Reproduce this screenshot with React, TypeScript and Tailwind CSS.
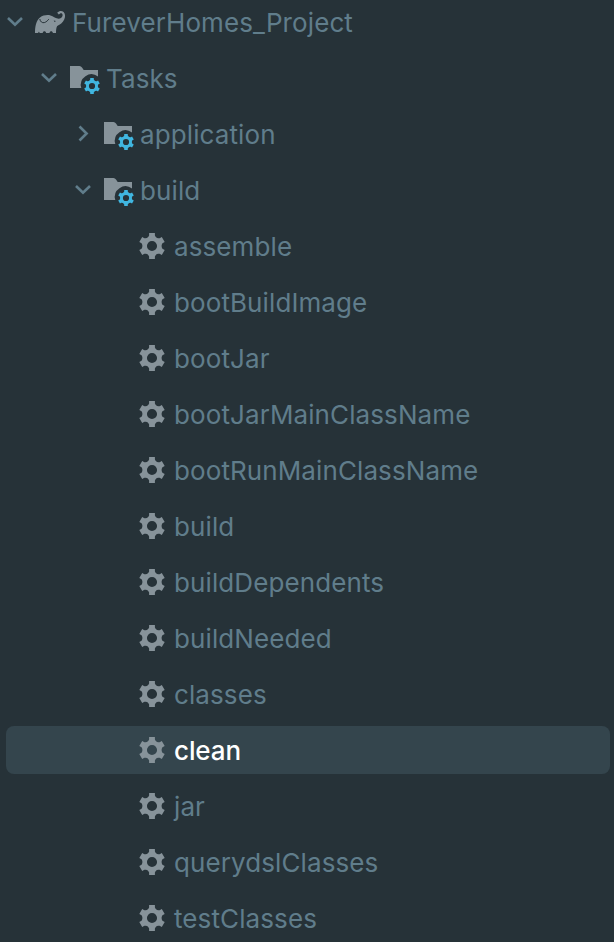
import React from "react";
import clsx from "clsx";

type IconKind = "gradle" | "folder" | "task";

type TreeNode = {
  label: string;
  icon: IconKind;
  level: number;
  open?: boolean;
  selected?: boolean;
};

const tasks = [
  "assemble",
  "bootBuildImage",
  "bootJar",
  "bootJarMainClassName",
  "bootRunMainClassName",
  "build",
  "buildDependents",
  "buildNeeded",
  "classes",
  "clean",
  "jar",
  "querydslClasses",
  "testClasses",
];

const nodes: TreeNode[] = [
  { label: "FureverHomes_Project", icon: "gradle", level: 0, open: true },
  { label: "Tasks", icon: "folder", level: 1, open: true },
  { label: "application", icon: "folder", level: 2, open: false },
  { label: "build", icon: "folder", level: 2, open: true },
  ...tasks.map((label): TreeNode => ({
    label,
    icon: "task",
    level: 3,
    selected: label === "clean",
  })),
];

const indents = ["pl-0", "pl-[34px]", "pl-[68px]", "pl-[102px]"];

// Six-toothed gear around the origin, outer radius 13
function Gear() {
  return (
    <>
      <circle r="7.35" fill="none" stroke="currentColor" strokeWidth="4.6" />
      {[0, 60, 120, 180, 240, 300].map((angle) => (
        <path
          key={angle}
          d="M-4.6 -7.6L-2.9 -10.4V-13H2.9V-10.4L4.6 -7.6Z"
          fill="currentColor"
          transform={`rotate(${angle})`}
        />
      ))}
    </>
  );
}

function TaskIcon() {
  return (
    <svg viewBox="-16 -16 32 32" className="size-8 text-[#87939a]">
      <Gear />
    </svg>
  );
}

function FolderIcon() {
  return (
    <svg viewBox="0 0 32 32" className="size-8 overflow-visible">
      <path d="M2 4H11.5Q13 4 14 5.5L15.7 8H30V14.6A10.6 10.6 0 0 0 13.3 26H2Z" fill="#87939a" />
      <g className="text-[#40b6e0]" transform="translate(24 24) scale(0.615)">
        <Gear />
      </g>
    </svg>
  );
}

function GradleIcon() {
  return (
    <svg viewBox="0 0 30 22" className="h-[22px] w-[30px] overflow-visible">
      <path
        d="M0 22C0 15.5 1.2 9.3 5 6.4C8 4.2 12.5 3.6 15.5 4.5C18.5 5.4 20 7.3 22.6 7.6C25.4 7.9 27.6 6.3 27.6 4.2C27.6 2.4 26.1 1.9 24.9 2.7L23.8 3.6L22.2 1.7C24.2 -0.3 26.8 -0.5 28.6 1C30.6 2.9 30.4 6.2 29.1 8.8C27.7 11.6 25.2 13.6 22.2 15.1C21.3 16.6 21 19.2 21 22H17.9C17.6 19.5 14.8 19.5 14.5 22H11.1C10.8 19.5 8 19.5 7.7 22H4.6C4.4 20.3 3.4 20.3 3.2 22Z"
        fill="#87939a"
      />
      {/* ear */}
      <path
        d="M4.8 8C5.2 10.6 7.2 12.2 9.3 11.6C11.4 11 12.6 9.6 13.8 8.2"
        fill="none"
        stroke="#263238"
        strokeWidth="1"
      />
      {/* eye */}
      <path d="M18.7 9.4L21 9.9L19.6 10.9Z" fill="#263238" />
    </svg>
  );
}

function Chevron({ open }: { open: boolean }) {
  return (
    <svg
      viewBox="-9 -9 18 18"
      className="size-[18px] text-[#607d8b]"
      fill="none"
      stroke="currentColor"
      strokeWidth="2.6"
    >
      <path d={open ? "M-7 -4L0 2.8L7 -4" : "M-3.5 -7.5L3.6 -0.5L-3.5 6.5"} />
    </svg>
  );
}

function NodeIcon({ kind }: { kind: IconKind }) {
  if (kind === "gradle") return <GradleIcon />;
  if (kind === "folder") return <FolderIcon />;
  return <TaskIcon />;
}

function Row({ node }: { node: TreeNode }) {
  return (
    <li
      className={clsx(
        "mr-1 ml-1.5 flex h-12 items-center rounded-lg",
        indents[node.level],
        node.selected ? "bg-[#34454d] font-medium tracking-[-0.1px] text-white" : "tracking-[0.1px] text-[#607d8b]"
      )}
    >
      <span className="flex w-7 shrink-0">
        {node.open !== undefined && <Chevron open={node.open} />}
      </span>
      <span className="flex w-8 shrink-0 justify-center">
        <NodeIcon kind={node.icon} />
      </span>
      <span className="pt-0.5 pl-1.5 leading-8">{node.label}</span>
    </li>
  );
}

export default function App() {
  return (
    <div className="h-[942px] w-[614px] overflow-hidden bg-[#263238] font-['Inter',sans-serif] text-[26px]">
      <ul className="-mt-0.5 flex flex-col gap-2">
        {nodes.map((node, i) => (
          <Row key={i} node={node} />
        ))}
      </ul>
    </div>
  );
}
